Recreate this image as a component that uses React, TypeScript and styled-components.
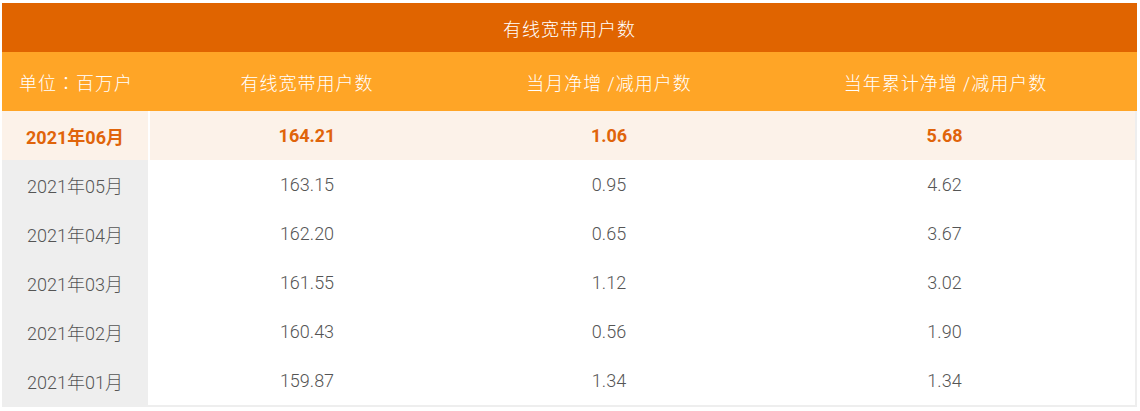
import styled, { createGlobalStyle } from "styled-components";

const GlobalStyle = createGlobalStyle`
  body {
    margin: 0;
    background: #fff;
    font-family: Roboto, "Noto Sans CJK SC", sans-serif;
  }
`

const Wrapper = styled.div`
  padding: 3px 3px 0 2px;
`
const Table = styled.div`
  width: 1135px;
`
const Title = styled.div`
  height: 49px;
  display: flex;
  align-items: center;
  justify-content: center;
  background: #e06400;
  color: #fff;
  font-size: 18px;
  font-weight: 300;
  letter-spacing: 1px;
`
const Row = styled.div<{ $head?: boolean; $hot?: boolean }>`
  display: grid;
  grid-template-columns: 148px 314px 290px 1fr;
  height: ${p => (p.$head ? 59 : 49)}px;
  background: ${p => (p.$head ? "#ffa526" : p.$hot ? "#fcf2e9" : "#fff")};
  color: ${p => (p.$head ? "#fff" : p.$hot ? "#e0640a" : "#555")};
  font-size: 18px;
  font-weight: ${p => (p.$hot ? 700 : 300)};
`
const Body = styled.div`
  border-right: 2px solid #eee;
  border-bottom: 2px solid #eee;
`
const Cell = styled.div<{ $first?: boolean; $gray?: boolean }>`
  display: flex;
  align-items: center;
  justify-content: center;
  box-sizing: border-box;
  background: ${p => (p.$gray ? "#eee" : "transparent")};
  border-right: ${p => (p.$first ? "2px solid #fff" : "none")};
`
const HeadCell = styled(Cell)`
  border: none;
  letter-spacing: 1px;
`
// centred full-width colon, as the TC face draws it
const Colon = styled.span`
  font-family: "Noto Sans CJK TC", sans-serif;
`

const data = [
  ["2021年06月", "164.21", "1.06", "5.68"],
  ["2021年05月", "163.15", "0.95", "4.62"],
  ["2021年04月", "162.20", "0.65", "3.67"],
  ["2021年03月", "161.55", "1.12", "3.02"],
  ["2021年02月", "160.43", "0.56", "1.90"],
  ["2021年01月", "159.87", "1.34", "1.34"],
]

function App() {
  return (
    <Wrapper>
      <GlobalStyle />
      <Table>
        <Title>有线宽带用户数</Title>
        <Row $head>
          <HeadCell>单位<Colon>：</Colon>百万户</HeadCell>
          <HeadCell>有线宽带用户数</HeadCell>
          <HeadCell>当月净增 /减用户数</HeadCell>
          <HeadCell>当年累计净增 /减用户数</HeadCell>
        </Row>
        <Body>
          {data.map((row, i) => (
            <Row key={row[0]} $hot={i === 0}>
              {row.map((v, j) => (
                <Cell key={j} $first={j === 0} $gray={j === 0 && i !== 0}>
                  {v}
                </Cell>
              ))}
            </Row>
          ))}
        </Body>
      </Table>
    </Wrapper>
  )
}

export default App
